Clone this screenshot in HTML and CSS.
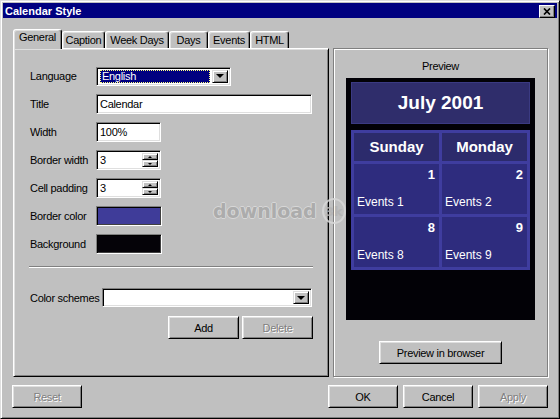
FILE: index.html
```html
<!DOCTYPE html>
<html lang="en">
<head>
<meta charset="utf-8">
<title>Calendar Style</title>
<link rel="stylesheet" href="styles.css">
</head>
<body>
<div class="window">
  <div class="titlebar">
    <span class="title">Calendar Style</span>
    <span class="close"><svg width="8" height="7" viewBox="0 0 8 7"><path d="M1 0.5 L7 6.5 M7 0.5 L1 6.5" stroke="#000" stroke-width="1.7" fill="none"/></svg></span>
  </div>
  <div class="body">
    <div class="main">
      <div class="tabs">
        <div class="tab active tab-general">General</div>
        <div class="tab tab-caption">Caption</div>
        <div class="tab tab-weekdays">Week Days</div>
        <div class="tab tab-days">Days</div>
        <div class="tab tab-events">Events</div>
        <div class="tab tab-html">HTML</div>
      </div>
      <div class="panel">
        <div class="form">
          <span class="label">Language</span>
          <div class="combo combo-lang">
            <span class="combo-value selected">English</span>
            <span class="combo-btn"><span class="arrow-down"></span></span>
          </div>

          <span class="label">Title</span>
          <div class="field w-title">Calendar</div>

          <span class="label">Width</span>
          <div class="field w-short">100%</div>

          <span class="label">Border width</span>
          <div class="field spin w-short">
            <span class="spin-value">3</span>
            <span class="spin-btns"><span class="spin-btn"><span class="arrow-up-s"></span></span><span class="spin-btn"><span class="arrow-down-s"></span></span></span>
          </div>

          <span class="label">Cell padding</span>
          <div class="field spin w-short">
            <span class="spin-value">3</span>
            <span class="spin-btns"><span class="spin-btn"><span class="arrow-up-s"></span></span><span class="spin-btn"><span class="arrow-down-s"></span></span></span>
          </div>

          <span class="label">Border color</span>
          <div class="swatch swatch-border"></div>

          <span class="label">Background</span>
          <div class="swatch swatch-bg"></div>
        </div>
        <div class="sep"></div>
        <div class="scheme-row">
          <span class="label label-scheme">Color schemes</span>
          <div class="combo combo-scheme">
            <span class="combo-value"></span>
            <span class="combo-btn"><span class="arrow-down"></span></span>
          </div>
        </div>
        <div class="scheme-btns">
          <button class="btn btn-scheme">Add</button>
          <button class="btn btn-scheme disabled">Delete</button>
        </div>
      </div>
      <div class="preview-box">
        <div class="preview-label">Preview</div>
        <div class="preview">
          <div class="cal-caption">July 2001</div>
          <div class="cal-table">
            <div class="cal-head">Sunday</div>
            <div class="cal-head">Monday</div>
            <div class="cal-cell"><span class="cal-num">1</span><span class="cal-ev">Events 1</span></div>
            <div class="cal-cell"><span class="cal-num">2</span><span class="cal-ev">Events 2</span></div>
            <div class="cal-cell"><span class="cal-num">8</span><span class="cal-ev">Events 8</span></div>
            <div class="cal-cell"><span class="cal-num">9</span><span class="cal-ev">Events 9</span></div>
          </div>
        </div>
        <button class="btn btn-preview">Preview in browser</button>
      </div>
    </div>
    <div class="footer">
      <button class="btn btn-foot btn-reset disabled">Reset</button>
      <div class="footer-right">
        <button class="btn btn-foot">OK</button>
        <button class="btn btn-foot">Cancel</button>
        <button class="btn btn-foot disabled">Apply</button>
      </div>
    </div>
  </div>
  <div class="watermark"><span class="wm-text">download</span><span class="wm-logo">3k</span></div>
</div>
</body>
</html>
```
FILE: styles.css
```css
* { box-sizing: border-box; }
html, body { margin: 0; padding: 0; }
body {
  width: 560px;
  height: 419px;
  overflow: hidden;
  background: #c0c0c0;
  font-family: "Liberation Sans", Arial, sans-serif;
  font-size: 11px;
  letter-spacing: -0.3px;
  color: #000;
}

.window {
  position: relative;
  width: 560px;
  height: 419px;
  border: 1px solid;
  border-color: #dfdfdf #000 #000 #dfdfdf;
  box-shadow: inset 1px 1px #fff, inset -1px -1px #808080;
  padding: 2px;
  background: #c0c0c0;
}

.titlebar {
  height: 15px;
  background: #000080;
  color: #fff;
  display: flex;
  align-items: center;
  justify-content: space-between;
  padding: 0 2px;
  font-weight: bold;
  letter-spacing: 0;
}
.close {
  width: 16px;
  height: 13px;
  margin-top: 1px;
  background: #c0c0c0;
  border: 1px solid;
  border-color: #fff #000 #000 #fff;
  box-shadow: inset -1px -1px #808080;
  display: flex;
  align-items: center;
  justify-content: center;
}

.body { padding: 11px 9px 0 10px; }

.main {
  display: grid;
  grid-template-columns: 316px 215px;
  grid-template-rows: 19px 329px;
  column-gap: 4px;
}

.tabs {
  grid-column: 1;
  grid-row: 1;
  display: flex;
  align-items: flex-end;
}
.tab {
  height: 17px;
  border: 1px solid;
  border-bottom: none;
  border-color: #fff #000 transparent #fff;
  box-shadow: inset -1px 0 #808080, inset 1px 1px #dfdfdf;
  border-radius: 3px 3px 0 0;
  text-align: center;
  padding-top: 2px;
  line-height: 13px;
  background: #c0c0c0;
}
.tab.active {
  height: 20px;
  margin-bottom: -1px;
  padding-top: 1px;
  position: relative;
  z-index: 1;
}
.tab-general { width: 49px; }
.tab-caption { width: 43px; }
.tab-weekdays { width: 64px; }
.tab-days { width: 39px; }
.tab-events { width: 42px; }
.tab-html { width: 39px; }

.panel {
  grid-column: 1;
  grid-row: 2;
  border: 1px solid;
  border-color: #fff #000 #000 #fff;
  box-shadow: inset 1px 1px #dfdfdf, inset -1px -1px #808080;
  padding: 17px 15px 0 16px;
}

.form {
  display: grid;
  grid-template-columns: 66px auto;
  grid-auto-rows: 20px;
  row-gap: 8px;
  align-items: center;
  justify-items: start;
}
.label { white-space: nowrap; }

.field {
  height: 20px;
  background: #fff;
  border: 1px solid;
  border-color: #808080 #fff #fff #808080;
  box-shadow: inset 1px 1px #000, inset -1px -1px #dfdfdf;
  padding: 0 3px;
  line-height: 18px;
}
.w-title { width: 216px; }
.w-short { width: 65px; }

.spin {
  display: flex;
  padding: 2px 2px 2px 3px;
  line-height: 14px;
}
.spin-value { flex: 1; }
.spin-btns {
  width: 16px;
  display: flex;
  flex-direction: column;
}
.spin-btn {
  flex: 1;
  background: #c0c0c0;
  border: 1px solid;
  border-color: #dfdfdf #000 #000 #dfdfdf;
  box-shadow: inset 1px 1px #fff, inset -1px -1px #808080;
  display: flex;
  align-items: center;
  justify-content: center;
}
.arrow-up-s {
  width: 0; height: 0;
  border-left: 2px solid transparent;
  border-right: 2px solid transparent;
  border-bottom: 2px solid #000;
}
.arrow-down-s {
  width: 0; height: 0;
  border-left: 2px solid transparent;
  border-right: 2px solid transparent;
  border-top: 2px solid #000;
}

.combo {
  display: flex;
  height: 19px;
  background: #fff;
  border: 1px solid;
  border-color: #808080 #fff #fff #808080;
  box-shadow: inset 1px 1px #000, inset -1px -1px #dfdfdf;
  padding: 2px;
}
.combo-lang { width: 135px; }
.combo-scheme { width: 210px; }
.combo-value {
  flex: 1;
  line-height: 13px;
  padding-left: 2px;
  margin-right: 1px;
}
.combo-value.selected {
  background: #000080;
  color: #fff;
  margin: 0 2px 0 1px;
  outline: 1px dotted #ffff80;
  outline-offset: -1px;
}
.combo-btn {
  width: 16px;
  background: #c0c0c0;
  border: 1px solid;
  border-color: #dfdfdf #000 #000 #dfdfdf;
  box-shadow: inset 1px 1px #fff, inset -1px -1px #808080;
  display: flex;
  align-items: center;
  justify-content: center;
}
.arrow-down {
  width: 0; height: 0;
  border-left: 4px solid transparent;
  border-right: 4px solid transparent;
  border-top: 4px solid #000;
}

.swatch {
  width: 66px;
  height: 20px;
  border: 1px solid;
  border-color: #808080 #fff #fff #808080;
  box-shadow: inset 1px 1px #000, inset -1px -1px #404040;
}
.swatch-border { background: #3f3c99; }
.swatch-bg { background: #050308; }

.sep {
  height: 2px;
  border-top: 1px solid #808080;
  border-bottom: 1px solid #fff;
  margin: 12px 0 0 -1px;
}

.scheme-row {
  display: flex;
  align-items: center;
  margin-top: 20px;
}
.label-scheme { width: 72px; }

.scheme-btns {
  display: flex;
  justify-content: flex-end;
  gap: 3px;
  margin-top: 9px;
}

.btn {
  font: inherit;
  letter-spacing: inherit;
  height: 23px;
  background: #c0c0c0;
  border: 1px solid;
  border-color: #fff #000 #000 #fff;
  box-shadow: inset 1px 1px #dfdfdf, inset -1px -1px #808080;
  padding: 0;
  color: #000;
}
.btn.disabled {
  color: #808080;
  text-shadow: 1px 1px #fff;
}
.btn-scheme { width: 71px; }

.preview-box {
  grid-column: 2;
  grid-row: 2;
  border: 1px solid #808080;
  box-shadow: inset 1px 1px #fff, 1px 1px #fff;
  display: flex;
  flex-direction: column;
  align-items: center;
  padding-top: 11px;
}
.preview-label { line-height: 13px; }
.preview {
  margin-top: 5px;
  width: 189px;
  height: 242px;
  background: #020106;
  padding: 4px 5px;
}
.cal-caption {
  height: 42px;
  background: #2f2d6b;
  border: 1px solid #3b3a82;
  color: #fff;
  font-weight: bold;
  font-size: 19px;
  letter-spacing: 0;
  line-height: 40px;
  text-align: center;
}
.cal-table {
  margin-top: 6px;
  display: grid;
  grid-template-columns: 85px 85px;
  grid-template-rows: 28px 50px 50px;
  gap: 3px;
  padding: 3px;
  background: #3f3d9f;
}
.cal-head {
  background: #2c2b6c;
  color: #fff;
  font-weight: bold;
  font-size: 15px;
  letter-spacing: 0;
  line-height: 28px;
  text-align: center;
}
.cal-cell {
  background: #2e2c7e;
  color: #fff;
  display: flex;
  flex-direction: column;
  justify-content: space-between;
  padding: 3px 4px 5px 3px;
  letter-spacing: 0;
}
.cal-num {
  align-self: flex-end;
  font-weight: bold;
  font-size: 13px;
  line-height: 15px;
}
.cal-ev {
  font-size: 12px;
  line-height: 14px;
}
.btn-preview {
  margin-top: 21px;
  width: 123px;
}

.footer {
  display: flex;
  justify-content: space-between;
  margin-top: 8px;
}
.footer-right {
  display: flex;
  gap: 5px;
}
.btn-foot { width: 70px; }
.btn-reset { margin-left: -1px; }

.watermark {
  position: absolute;
  left: 212px;
  top: 197px;
  display: flex;
  align-items: center;
  gap: 5px;
  pointer-events: none;
  opacity: 0.85;
}
.wm-text {
  font-family: "DejaVu Sans", sans-serif;
  font-weight: bold;
  font-size: 19px;
  letter-spacing: 0;
  color: #a9a9a9;
  text-shadow: -1px 0 #dcdcdc, 1px 0 #dcdcdc, 0 -1px #dcdcdc, 0 1px #dcdcdc;
}
.wm-logo {
  width: 24px;
  height: 26px;
  border: 2px solid #d8d8d8;
  border-radius: 50%;
  font-family: "DejaVu Sans", sans-serif;
  font-weight: bold;
  font-size: 13px;
  letter-spacing: 0;
  color: #b4b4b4;
  display: flex;
  align-items: center;
  justify-content: center;
}
```
